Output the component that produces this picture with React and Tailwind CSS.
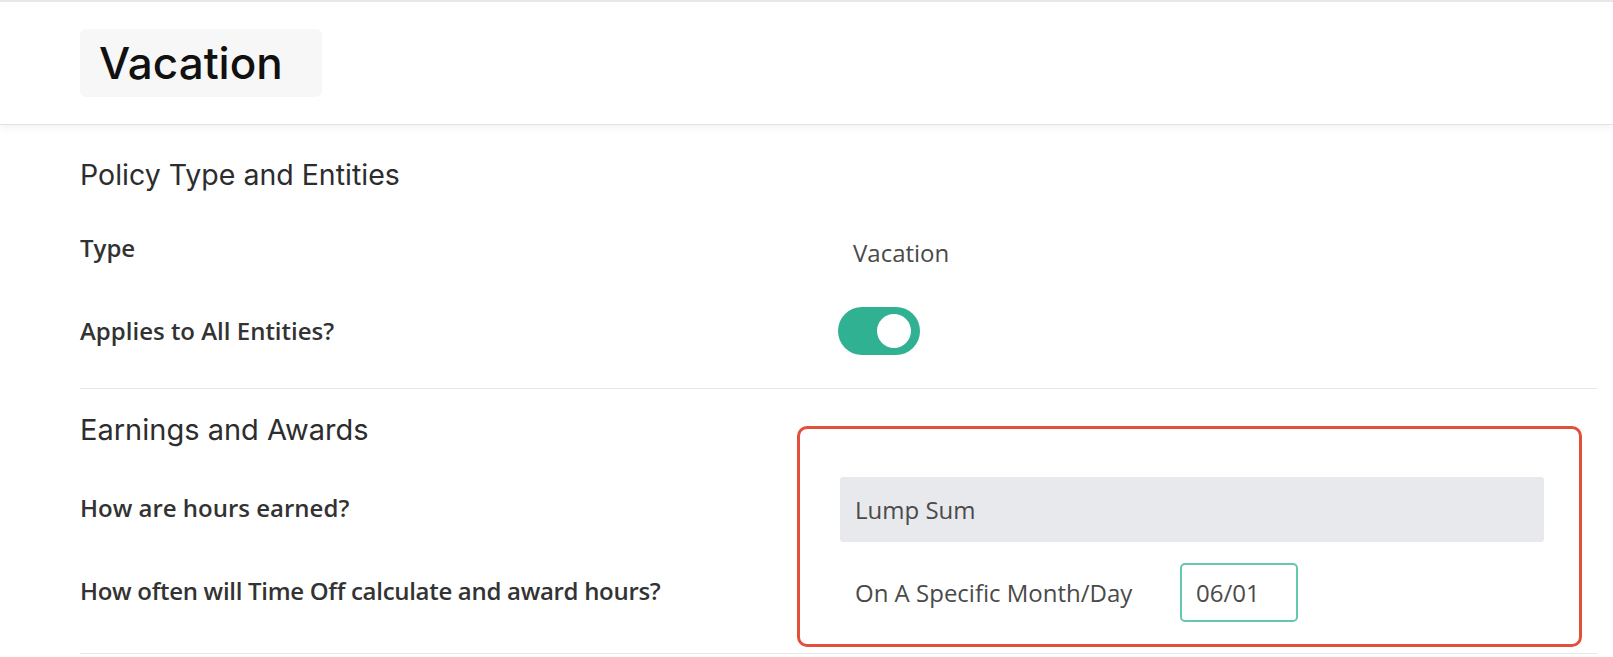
import React from "react";

// label column on the left, value column starts at x=838
function Row({ label, children, className = "" }) {
  return (
    <div className={"flex " + className}>
      <div className="w-[758px] shrink-0 text-[24px] leading-[32px] font-semibold text-[#333333]">
        {label}
      </div>
      <div className="flex-1">{children}</div>
    </div>
  );
}

function Toggle() {
  return (
    <div className="relative h-[48px] w-[82px] rounded-full bg-[#2fb192]">
      <div className="absolute right-[9px] top-[7px] h-[34px] w-[34px] rounded-full bg-white" />
    </div>
  );
}

export default function App() {
  return (
    <div
      className="min-h-screen bg-white text-[#333333]"
      style={{ fontFamily: '"Open Sans", "Liberation Sans", sans-serif' }}
    >
      {/* page header */}
      <div className="border-t-2 border-b border-t-[#e5e7eb] border-b-[#dde3ea] bg-white px-[80px] pt-[27px] pb-[27px] shadow-[0_3px_8px_rgba(0,0,0,0.05)]">
        <div className="flex h-[68px] w-[242px] items-center rounded-[6px] bg-[#f7f7f7] pl-[19px]">
          <h1
            className="text-[44px] leading-none font-medium text-[#111111]"
            style={{ fontFamily: "Inter, sans-serif" }}
          >
            Vacation
          </h1>
        </div>
      </div>

      <div className="pl-[80px] pr-[16px]">
        {/* Policy Type and Entities */}
        <div className="pt-[33px] pb-[33px]">
          <h2
            className="text-[28.5px] leading-[34px] font-normal text-[#2d2d2d]"
            style={{ fontFamily: "Inter, sans-serif" }}
          >
            Policy Type and Entities
          </h2>
          <Row label="Type" className="mt-[40px] items-start">
            <div className="pl-[15px] pt-[5px] text-[24px] leading-[32px] text-[#4a4a4a]">
              Vacation
            </div>
          </Row>
          <Row label="Applies to All Entities?" className="mt-[38px] items-center">
            <Toggle />
          </Row>
        </div>

        {/* Earnings and Awards */}
        <div className="relative border-t border-b border-[#e5e7eb] pt-[24px] pb-[31px]">
          <h2
            className="text-[29px] leading-[34px] font-normal text-[#2d2d2d]"
            style={{ fontFamily: "Inter, sans-serif" }}
          >
            Earnings and Awards
          </h2>
          <Row label={<div className="pb-[3px]">How are hours earned?</div>} className="mt-[30px] items-center">
            <div className="ml-[2px] flex h-[65px] w-[704px] items-center rounded-[3px] bg-[#e8e9ec] pl-[15px] text-[24px] text-[#4a4a4a]">
              Lump Sum
            </div>
          </Row>
          <Row
            label={
              <div className="pb-[4px] tracking-[-0.3px]">
                How often will Time Off calculate and award hours?
              </div>
            }
            className="mt-[21px] items-center"
          >
            <div className="ml-[2px] flex items-center text-[24px] text-[#4a4a4a]">
              <span className="w-[340px] pl-[15px]">On A Specific Month/Day</span>
              <input
                readOnly
                value="06/01"
                className="h-[59px] w-[118px] rounded-[5px] border-2 border-[#62c8ae] bg-white pl-[14px] text-[24px] text-[#4a4a4a] outline-none"
                style={{ fontFamily: '"Open Sans", sans-serif' }}
              />
            </div>
          </Row>

          {/* highlight annotation over the answers */}
          <div className="pointer-events-none absolute left-[717px] top-[37px] h-[221px] w-[785px] rounded-[10px] border-[3px] border-[#e34f3b]" />
        </div>
      </div>
    </div>
  );
}
